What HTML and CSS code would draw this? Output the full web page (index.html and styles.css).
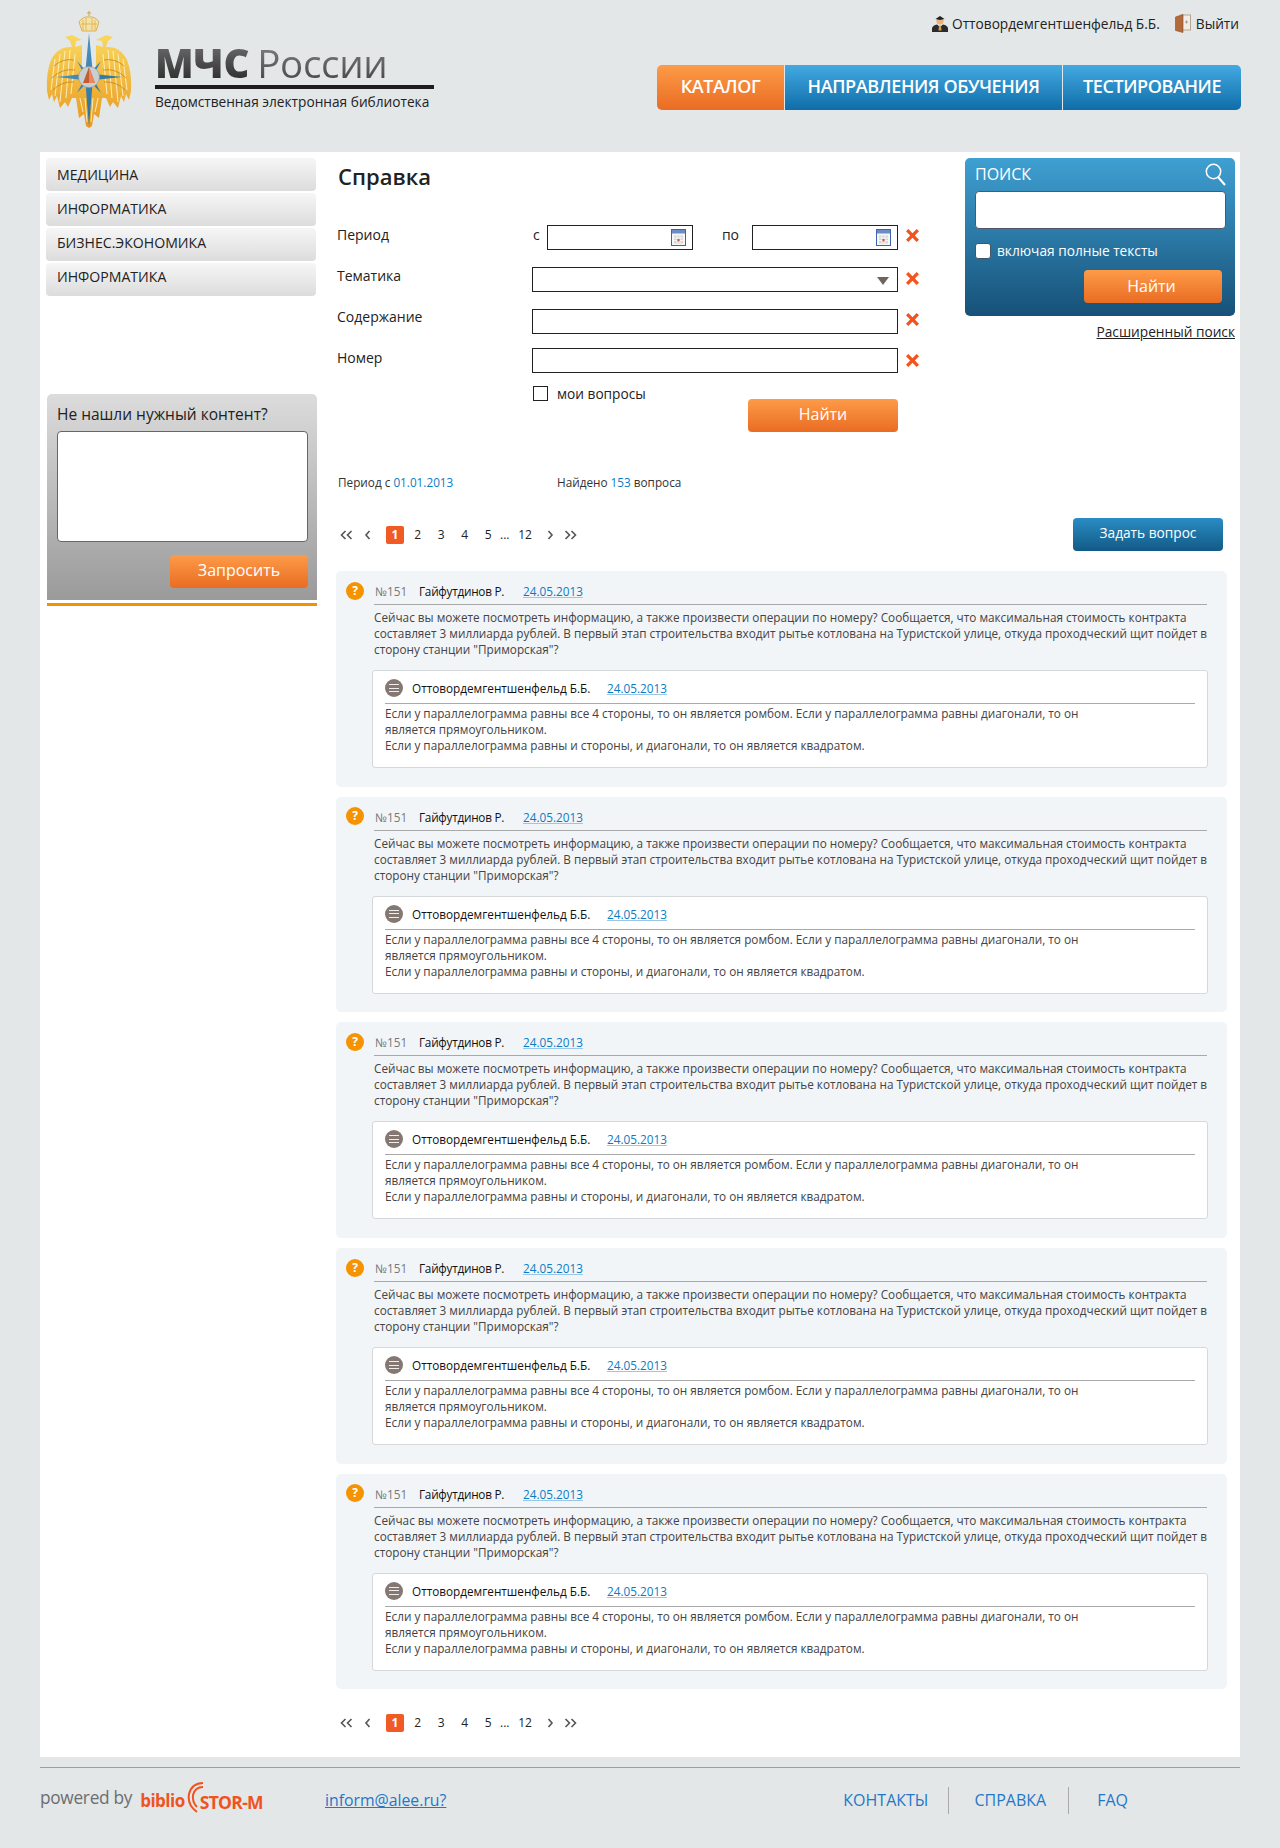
FILE: index.html
```html
<!DOCTYPE html>
<html lang="ru">
<head>
  <meta charset="UTF-8" />
  <title>МЧС России - Справка</title>
  <link rel="stylesheet" href="styles.css">
</head>
<body>

  <header class="top">
    <div class="logo">
      <svg class="emblem" width="88" height="118" viewBox="0 0 88 118">
        <defs>
          <linearGradient id="gold" x1="0" y1="0" x2="0" y2="1">
            <stop offset="0" stop-color="#f9d860"/>
            <stop offset="1" stop-color="#e8981f"/>
          </linearGradient>
          <linearGradient id="ray" x1="0" y1="0" x2="1" y2="1">
            <stop offset="0" stop-color="#5ba6cf"/>
            <stop offset="1" stop-color="#1c5f8e"/>
          </linearGradient>
          <g id="wing">
            <path d="M36 35 L29 37 L30 31 L36 30 L26 25 L19 27 L24 31 L26 37 Q12 36 5 50 Q0 62 1 81 L3 90 L6 84 L8 92 L11 86 L14 98 L19 92 L22 97 L26 88 L30 88 L33 108 L38 104 L40 116 L43 118 L43 80 L36 70Z" fill="url(#gold)"/>
            <path d="M9 49L5 80M14 44L9 86M19 41L14 92M24 40L20 88M29 44L25 84M34 88L37 102M39 88L41 112" stroke="#fff3c4" stroke-width=".9" fill="none"/>
            <path d="M8 56Q17 48 28 50M6 68Q16 58 29 60M7 80Q16 71 28 72" stroke="#bd7a12" stroke-width=".7" fill="none"/>
          </g>
        </defs>
        <path d="M43 1v5M41 3h4" stroke="#e0a63a" stroke-width="1.1" fill="none"/>
        <path d="M36 21 L33 12 Q37 6 43 7 Q49 6 53 12 L50 21 Z" fill="#f2e2a6" stroke="#d9a23c" stroke-width=".8"/>
        <path d="M37 10v10M40 8v12M46 8v12M49 10v10M35 14h16" stroke="#d9a23c" stroke-width=".6"/>
        <use href="#wing"/>
        <use href="#wing" transform="translate(86 0) scale(-1 1)"/>
        <path d="M43 23L46.500 60L55 51L48 64L76 67L48 70L55 83L46.500 74L43 116L39.500 74L31 83L38 70L10 67L38 64L31 51L39.500 60Z" fill="url(#ray)"/>
        <circle cx="43" cy="67" r="10.500" fill="#c9ced1" stroke="#8f989d" stroke-width=".6"/>
        <path d="M43 57L49 73H37Z" fill="#c45c33"/>
        <path d="M43 57L49 73H43Z" fill="#e8875a"/>
      </svg>
      <div class="logo-text">
        <div class="logo-title"><b>МЧС</b> <span>России</span></div>
        <div class="logo-sub">Ведомственная электронная библиотека</div>
      </div>
    </div>

    <div class="top-right">
      <div class="user-line">
        <svg width="16" height="17" viewBox="0 0 16 17">
          <path d="M0 17V13Q1 10 5 9.500L8 12L11 9.500Q15 10 16 13V17Z" fill="#2b2b2b"/>
          <circle cx="8" cy="6" r="3.600" fill="#e9b27c"/>
          <path d="M3.500 4L8 1L12.500 4L8 5Z" fill="#222"/>
          <path d="M7 10.500h2l.5 5h-3z" fill="#d9a04c"/>
        </svg>
        <span class="user-name">Оттовордемгентшенфельд Б.Б.</span>
        <svg class="door" width="16" height="19" viewBox="0 0 16 19">
          <rect x="6" y="1" width="9.500" height="15" fill="#f1ede6" stroke="#b8a68f"/>
          <path d="M0.500 3L8 0.500V18.500L0.500 16.500Z" fill="#b4693a" stroke="#8c4d26" stroke-width=".6"/>
          <path d="M10 8h3M11.500 6.500v3" stroke="#9a9a9a"/>
        </svg>
        <span>Выйти</span>
      </div>
      <nav class="main-nav">
        <a class="nav-item nav-active nav-catalog">КАТАЛОГ</a>
        <a class="nav-item nav-study">НАПРАВЛЕНИЯ ОБУЧЕНИЯ</a>
        <a class="nav-item nav-test">ТЕСТИРОВАНИЕ</a>
      </nav>
    </div>
  </header>

  <div class="page">
    <aside class="sidebar">
      <a class="side-item">МЕДИЦИНА</a>
      <a class="side-item">ИНФОРМАТИКА</a>
      <a class="side-item">БИЗНЕС.ЭКОНОМИКА</a>
      <a class="side-item">ИНФОРМАТИКА</a>

      <div class="request-box">
        <h3>Не нашли нужный контент?</h3>
        <textarea class="request-text"></textarea>
        <button class="btn btn-request">Запросить</button>
      </div>
      <div class="request-line"></div>
    </aside>

    <main class="content">
      <div class="content-top">
        <div class="filter">
          <h1>Справка</h1>

          <div class="row row-period">
            <label>Период</label>
            <span class="from">с</span>
            <div class="input date">
              <svg width="15" height="17" viewBox="0 0 15 17"><use href="#cal"/></svg>
            </div>
            <span class="to">по</span>
            <div class="input date">
              <svg width="15" height="17" viewBox="0 0 15 17"><use href="#cal"/></svg>
            </div>
            <svg class="clear" width="13" height="13" viewBox="1 1 11 11"><use href="#cross"/></svg>
          </div>
          <div class="row row-theme">
            <label>Тематика</label>
            <div class="input wide select"><span class="arrow"></span></div>
            <svg class="clear" width="13" height="13" viewBox="1 1 11 11"><use href="#cross"/></svg>
          </div>
          <div class="row row-text">
            <label>Содержание</label>
            <div class="input wide"></div>
            <svg class="clear" width="13" height="13" viewBox="1 1 11 11"><use href="#cross"/></svg>
          </div>
          <div class="row row-last">
            <label>Номер</label>
            <div class="input wide"></div>
            <svg class="clear" width="13" height="13" viewBox="1 1 11 11"><use href="#cross"/></svg>
          </div>

          <div class="mine">
            <span class="check"></span>
            <span>мои вопросы</span>
          </div>
          <button class="btn btn-find">Найти</button>

          <div class="info">
            <span class="info-period">Период с <em>01.01.2013</em></span>
            <span>Найдено <em>153</em> вопроса</span>
          </div>
        </div>

        <div class="search-col">
          <div class="search-box">
            <div class="search-head">
              <span>ПОИСК</span>
              <svg width="21" height="23" viewBox="0 0 21 23">
                <circle cx="8.500" cy="8.500" r="7.200" fill="none" stroke="#fff" stroke-width="1.500"/>
                <path d="M13 14L20 22" stroke="#fff" stroke-width="2"/>
              </svg>
            </div>
            <div class="search-input"></div>
            <div class="search-check"><span class="check-white"></span><span class="check-label">включая полные тексты</span></div>
            <button class="btn btn-search">Найти</button>
          </div>
          <a class="adv-link">Расширенный поиск</a>
        </div>
      </div>

      <div class="pager-row">
        <div class="pager">
          <svg class="pg-first" width="13" height="10" viewBox="0 0 13 10"><use href="#dbl-left"/></svg>
          <svg class="pg-prev" width="7" height="10" viewBox="0 0 7 10"><use href="#one-left"/></svg>
          <span class="pg-cur">1</span>
          <span class="pg">2</span><span class="pg">3</span><span class="pg">4</span><span class="pg">5</span>
          <span class="pg-dots">...</span><span class="pg-last">12</span>
          <svg class="pg-next" width="7" height="10" viewBox="0 0 7 10"><use href="#one-right"/></svg>
          <svg class="pg-end" width="13" height="10" viewBox="0 0 13 10"><use href="#dbl-right"/></svg>
        </div>
        <button class="btn btn-ask">Задать вопрос</button>
      </div>

      <div class="card">
        <div class="q-head">
          <span class="q-icon">?</span>
          <span class="q-num">№151</span><span class="q-name">Гайфутдинов Р.</span><a class="q-date">24.05.2013</a>
        </div>
        <p class="q-text">Сейчас вы можете посмотреть информацию, а также произвести операции по номеру? Сообщается, что максимальная стоимость контракта<br>составляет 3 миллиарда рублей. В первый этап строительства входит рытье котлована на Туристской улице, откуда проходческий щит пойдет в<br>сторону станции "Приморская"?</p>
        <div class="answer">
          <div class="a-head">
            <span class="a-icon"><i></i><i></i><i></i></span>
            <span class="a-name">Оттовордемгентшенфельд Б.Б.</span><a class="a-date">24.05.2013</a>
          </div>
          <p class="a-text">Если у параллелограмма равны все 4 стороны, то он является ромбом. Если у параллелограмма равны диагонали, то он<br>является прямоугольником.<br>Если у параллелограмма равны и стороны, и диагонали, то он является квадратом.</p>
        </div>
      </div>

      <div class="card">
        <div class="q-head">
          <span class="q-icon">?</span>
          <span class="q-num">№151</span><span class="q-name">Гайфутдинов Р.</span><a class="q-date">24.05.2013</a>
        </div>
        <p class="q-text">Сейчас вы можете посмотреть информацию, а также произвести операции по номеру? Сообщается, что максимальная стоимость контракта<br>составляет 3 миллиарда рублей. В первый этап строительства входит рытье котлована на Туристской улице, откуда проходческий щит пойдет в<br>сторону станции "Приморская"?</p>
        <div class="answer">
          <div class="a-head">
            <span class="a-icon"><i></i><i></i><i></i></span>
            <span class="a-name">Оттовордемгентшенфельд Б.Б.</span><a class="a-date">24.05.2013</a>
          </div>
          <p class="a-text">Если у параллелограмма равны все 4 стороны, то он является ромбом. Если у параллелограмма равны диагонали, то он<br>является прямоугольником.<br>Если у параллелограмма равны и стороны, и диагонали, то он является квадратом.</p>
        </div>
      </div>

      <div class="card">
        <div class="q-head">
          <span class="q-icon">?</span>
          <span class="q-num">№151</span><span class="q-name">Гайфутдинов Р.</span><a class="q-date">24.05.2013</a>
        </div>
        <p class="q-text">Сейчас вы можете посмотреть информацию, а также произвести операции по номеру? Сообщается, что максимальная стоимость контракта<br>составляет 3 миллиарда рублей. В первый этап строительства входит рытье котлована на Туристской улице, откуда проходческий щит пойдет в<br>сторону станции "Приморская"?</p>
        <div class="answer">
          <div class="a-head">
            <span class="a-icon"><i></i><i></i><i></i></span>
            <span class="a-name">Оттовордемгентшенфельд Б.Б.</span><a class="a-date">24.05.2013</a>
          </div>
          <p class="a-text">Если у параллелограмма равны все 4 стороны, то он является ромбом. Если у параллелограмма равны диагонали, то он<br>является прямоугольником.<br>Если у параллелограмма равны и стороны, и диагонали, то он является квадратом.</p>
        </div>
      </div>

      <div class="card">
        <div class="q-head">
          <span class="q-icon">?</span>
          <span class="q-num">№151</span><span class="q-name">Гайфутдинов Р.</span><a class="q-date">24.05.2013</a>
        </div>
        <p class="q-text">Сейчас вы можете посмотреть информацию, а также произвести операции по номеру? Сообщается, что максимальная стоимость контракта<br>составляет 3 миллиарда рублей. В первый этап строительства входит рытье котлована на Туристской улице, откуда проходческий щит пойдет в<br>сторону станции "Приморская"?</p>
        <div class="answer">
          <div class="a-head">
            <span class="a-icon"><i></i><i></i><i></i></span>
            <span class="a-name">Оттовордемгентшенфельд Б.Б.</span><a class="a-date">24.05.2013</a>
          </div>
          <p class="a-text">Если у параллелограмма равны все 4 стороны, то он является ромбом. Если у параллелограмма равны диагонали, то он<br>является прямоугольником.<br>Если у параллелограмма равны и стороны, и диагонали, то он является квадратом.</p>
        </div>
      </div>

      <div class="card">
        <div class="q-head">
          <span class="q-icon">?</span>
          <span class="q-num">№151</span><span class="q-name">Гайфутдинов Р.</span><a class="q-date">24.05.2013</a>
        </div>
        <p class="q-text">Сейчас вы можете посмотреть информацию, а также произвести операции по номеру? Сообщается, что максимальная стоимость контракта<br>составляет 3 миллиарда рублей. В первый этап строительства входит рытье котлована на Туристской улице, откуда проходческий щит пойдет в<br>сторону станции "Приморская"?</p>
        <div class="answer">
          <div class="a-head">
            <span class="a-icon"><i></i><i></i><i></i></span>
            <span class="a-name">Оттовордемгентшенфельд Б.Б.</span><a class="a-date">24.05.2013</a>
          </div>
          <p class="a-text">Если у параллелограмма равны все 4 стороны, то он является ромбом. Если у параллелограмма равны диагонали, то он<br>является прямоугольником.<br>Если у параллелограмма равны и стороны, и диагонали, то он является квадратом.</p>
        </div>
      </div>

      <div class="pager pager-bottom">
        <svg class="pg-first" width="13" height="10" viewBox="0 0 13 10"><use href="#dbl-left"/></svg>
        <svg class="pg-prev" width="7" height="10" viewBox="0 0 7 10"><use href="#one-left"/></svg>
        <span class="pg-cur">1</span>
        <span class="pg">2</span><span class="pg">3</span><span class="pg">4</span><span class="pg">5</span>
        <span class="pg-dots">...</span><span class="pg-last">12</span>
        <svg class="pg-next" width="7" height="10" viewBox="0 0 7 10"><use href="#one-right"/></svg>
        <svg class="pg-end" width="13" height="10" viewBox="0 0 13 10"><use href="#dbl-right"/></svg>
      </div>
    </main>
  </div>

  <footer class="bottom">
    <div class="powered">
      <span class="powered-by">powered by</span>
      <span class="biblio">biblio</span>
      <svg class="biblio-arcs" width="19" height="32" viewBox="0 0 19 32">
        <path d="M17 2Q6 2 3 13Q1 24 11 31" fill="none" stroke="#f0531f" stroke-width="2"/>
        <path d="M17 6Q9 6 7 14Q6 21 11 26" fill="none" stroke="#f0531f" stroke-width="2"/>
      </svg>
      <span class="stor">STOR-M</span>
    </div>
    <a class="mail">inform@alee.ru?</a>
    <div class="foot-links">
      <a class="foot-contacts">КОНТАКТЫ</a>
      <a class="foot-help">СПРАВКА</a>
      <a class="foot-faq">FAQ</a>
    </div>
  </footer>

  <!-- shared icons -->
  <svg class="defs" width="0" height="0">
    <defs>
      <g id="cal">
        <rect x=".5" y=".5" width="14" height="16" fill="#f4f6fa" stroke="#3f62ad"/>
        <rect x="1" y="1" width="13" height="3.500" fill="#6c8cc6"/>
        <path d="M3 6.500h9v8h-9z" fill="#d8d8d8"/>
        <path d="M3 9h9M3 11.500h9M6 6.500v8M9 6.500v8" stroke="#fff" stroke-width=".7"/>
        <rect x="6.400" y="10" width="2.200" height="2.200" fill="#d9503c"/>
      </g>
      <path id="cross" d="M1 3L3 1L6.500 4.500L10 1L12 3L8.500 6.500L12 10L10 12L6.500 8.500L3 12L1 10L4.500 6.500Z" fill="#f1541f"/>
      <path id="one-left" d="M5.500 1L2 5L5.500 9" fill="none" stroke="#555" stroke-width="1.600"/>
      <path id="one-right" d="M1.500 1L5 5L1.500 9" fill="none" stroke="#555" stroke-width="1.600"/>
      <path id="dbl-left" d="M5.500 1L1.500 5L5.500 9M11.500 1L7.500 5L11.500 9" fill="none" stroke="#555" stroke-width="1.600"/>
      <path id="dbl-right" d="M1.500 1L5.500 5L1.500 9M7.500 1L11.500 5L7.500 9" fill="none" stroke="#555" stroke-width="1.600"/>
    </defs>
  </svg>

</body>
</html>
```

FILE: styles.css
```css
body {
  margin: 0;
  background: #e3e7e8;
  font-family: "Open Sans", "Noto Sans", sans-serif;
  font-size: 11.75px;
  color: #333;
}
a {
  cursor: pointer;
}
p, h1, h3 {
  margin: 0;
}
em {
  font-style: normal;
  color: #0a7cc4;
}
.defs {
  display: block;
  height: 0;
}

/* header */
.top {
  height: 152px;
  display: flex;
  justify-content: space-between;
  padding: 0 39px 0 46px;
}
.logo {
  display: flex;
  padding-top: 10px;
}
.emblem {
  display: block;
}
.logo-text {
  margin-left: 21px;
  padding-top: 31px;
  width: 279px;
}
.logo-title {
  font-size: 40px;
  line-height: 44px;
  height: 44px;
  white-space: nowrap;
  letter-spacing: -.3px;
  border-bottom: 4px solid #1d1d1d;
}
.logo-title b, .logo-title span {
  color: transparent;
  -webkit-background-clip: text;
  background-clip: text;
}
.logo-title b {
  font-weight: 800;
  background-image: linear-gradient(#7a7a7a, #1f1f1f);
}
.logo-title span {
  font-size: 38.5px;
  margin-left: -2px;
  background-image: linear-gradient(#8a8a8a, #3d3d3d);
}
.logo-sub {
  font-size: 13.7px;
  line-height: 18px;
  margin-top: 4px;
  color: #222;
}
.top-right {
  width: 584px;
}
.user-line {
  display: flex;
  justify-content: flex-end;
  align-items: center;
  height: 20px;
  margin-top: 13px;
  padding-right: 2px;
  font-size: 13.7px;
  color: #222;
}
.user-name {
  margin-left: 4px;
}
.door {
  margin: 0 5px 0 15px;
}
.main-nav {
  display: flex;
  margin-top: 32px;
  height: 45px;
}
.nav-item {
  display: flex;
  align-items: center;
  justify-content: center;
  box-sizing: border-box;
  padding-bottom: 4px;
  color: #fff;
  font-size: 18px;
  font-weight: 600;
  letter-spacing: -.4px;
  background: linear-gradient(#44a9e2, #0f6da8);
  border-left: 1px solid #e3e7e8;
}
.nav-catalog {
  width: 127px;
  border-left: 0;
  border-radius: 5px 0 0 5px;
  background: linear-gradient(#fd9b48, #e96c23);
}
.nav-study {
  width: 278px;
}
.nav-test {
  width: 179px;
  border-radius: 0 5px 5px 0;
}

/* page */
.page {
  display: flex;
  width: 1200px;
  height: 1605px;
  margin-left: 40px;
  background: #fff;
}
.sidebar {
  width: 271px;
  padding: 6px 0 0 6px;
  flex: none;
}
.side-item {
  display: block;
  width: 270px;
  height: 33px;
  line-height: 34px;
  margin-bottom: 2px;
  padding-left: 11px;
  box-sizing: border-box;
  font-size: 14.1px;
  color: #222;
  border-radius: 4px;
  background: linear-gradient(#f6f6f6, #dcdcdc);
}
.side-item:nth-child(2) {
  line-height: 32px;
}
.side-item:nth-child(3) {
  line-height: 30px;
}
.side-item:nth-child(4) {
  line-height: 28px;
}
.request-box {
  width: 270px;
  height: 206px;
  margin: 98px 0 0 1px;
  padding: 10px 9px 0 10px;
  box-sizing: border-box;
  border-radius: 5px 5px 0 0;
  background: linear-gradient(#dcdcdc, #9a9a9a);
  text-align: right;
}
.request-box h3 {
  font-size: 15.5px;
  line-height: 20px;
  font-weight: 400;
  color: #222;
  text-align: left;
}
.request-text {
  display: block;
  width: 251px;
  height: 111px;
  margin-top: 7px;
  padding: 0;
  box-sizing: border-box;
  border: 1px solid #666;
  border-radius: 4px;
  background: #fff;
  resize: none;
}
.request-line {
  width: 270px;
  height: 3px;
  margin: 3px 0 0 1px;
  background: #f39200;
}
.btn {
  display: block;
  border: 0;
  padding: 0 0 3px;
  color: #fff;
  font-family: inherit;
  font-size: 16px;
  border-radius: 4px;
  background: linear-gradient(#fd9b48, #e96c23);
  cursor: pointer;
}
.btn-request {
  width: 138px;
  height: 33px;
  margin: 13px 0 0 auto;
}

/* filter */
.content {
  width: 899px;
  margin-left: 19px;
  flex: none;
}
.content-top {
  display: flex;
  justify-content: space-between;
  height: 366px;
}
.filter {
  width: 584px;
  padding-left: 2px;
  box-sizing: border-box;
}
h1 {
  font-size: 22px;
  line-height: 30px;
  font-weight: 600;
  color: #222;
  margin-top: 9px;
}
.row {
  display: flex;
  align-items: flex-start;
  height: 25px;
  margin-bottom: 17px;
  font-size: 14px;
  color: #222;
}
.row-period {
  margin-top: 34px;
}
.row-last {
  margin-top: -3px;
  margin-bottom: 10px;
}
.row label {
  width: 194px;
  line-height: 20px;
  flex: none;
  margin-left: -1px;
  margin-right: 1px;
}
.row-theme label {
  margin-top: -1px;
}
.row-text label {
  margin-top: -2px;
}
.from {
  width: 15px;
  padding-left: 1px;
  box-sizing: border-box;
  line-height: 20px;
}
.to {
  width: 59px;
  padding-right: 13px;
  box-sizing: border-box;
  line-height: 20px;
  text-align: right;
}
.input {
  box-sizing: border-box;
  height: 25px;
  border: 1px solid #222;
  background: #fff;
  display: flex;
  align-items: center;
  justify-content: flex-end;
}
.date {
  width: 146px;
  padding-right: 6px;
}
.wide {
  width: 366px;
}
.select {
  padding-right: 8px;
}
.arrow {
  border-top: 8px solid #6d6560;
  border-left: 6px solid transparent;
  border-right: 6px solid transparent;
  margin-top: 2px;
}
.clear {
  margin: 4px 0 0 8px;
}
.row-theme .clear {
  margin-top: 5px;
}
.row-last .clear {
  margin-top: 6px;
}
.mine {
  display: flex;
  align-items: center;
  margin-left: 195px;
  height: 20px;
  font-size: 13.7px;
  color: #222;
}
.check {
  width: 15px;
  height: 15px;
  box-sizing: border-box;
  border: 1px solid #222;
  margin-right: 9px;
}
.btn-find {
  width: 150px;
  height: 33px;
  margin: -4px 0 0 410px;
}
.info {
  display: flex;
  margin-top: 42px;
  line-height: 16px;
  color: #333;
}
.info-period {
  width: 219px;
}

/* search */
.search-col {
  width: 270px;
  padding-top: 6px;
}
.search-box {
  height: 158px;
  box-sizing: border-box;
  padding: 0 9px 0 10px;
  border-radius: 5px;
  background: linear-gradient(#3fa0d2, #165178);
  color: #fff;
}
.search-head {
  display: flex;
  justify-content: space-between;
  height: 33px;
  padding-top: 6px;
  box-sizing: border-box;
  font-size: 16px;
  line-height: 21px;
}
.search-head svg {
  margin-top: -1px;
}
.search-input {
  height: 38px;
  box-sizing: border-box;
  background: #fff;
  border: 1px solid #556;
  border-radius: 4px;
}
.search-check {
  display: flex;
  align-items: center;
  height: 16px;
  margin-top: 14px;
  font-size: 13.7px;
}
.check-label {
  margin-top: -2px;
}
.check-white {
  width: 16px;
  height: 16px;
  box-sizing: border-box;
  background: #fff;
  border: 1px solid #456;
  border-radius: 3px;
  margin-right: 6px;
}
.btn-search {
  width: 138px;
  height: 33px;
  padding: 0 3px 2px 0;
  margin: 11px 0 0 109px;
}
.adv-link {
  display: block;
  margin-top: 7px;
  font-size: 13.7px;
  line-height: 18px;
  color: #222;
  text-align: right;
  text-decoration: underline;
}

/* pager */
.pager-row {
  display: flex;
  justify-content: space-between;
  align-items: center;
  height: 33px;
  width: 887px;
}
.btn-ask {
  width: 150px;
  height: 33px;
  padding-bottom: 4px;
  font-size: 13.7px;
  background: linear-gradient(#2a8cc4, #125a86);
}
.pager {
  display: flex;
  align-items: center;
  padding-left: 4px;
  height: 20px;
  font-size: 12px;
  color: #222;
}
.pager svg {
  flex: none;
}
.pg-prev {
  margin-left: 11px;
}
.pg-cur {
  width: 18px;
  height: 18px;
  line-height: 18px;
  margin-left: 15px;
  margin-right: 2px;
  text-align: center;
  color: #fff;
  font-weight: 700;
  background: #f15a24;
  border-radius: 2px;
}
.pg {
  width: 23.5px;
  text-align: center;
}
.pg-dots {
  width: 9px;
  text-align: center;
}
.pg-last {
  margin-left: 9px;
  width: 14px;
  text-align: center;
}
.pg-next {
  margin-left: 15px;
}
.pg-end {
  margin-left: 10px;
}
.pager-bottom {
  margin-top: 23.5px;
}

/* question cards */
.card {
  box-sizing: border-box;
  width: 891px;
  height: 215.7px;
  margin-top: 10px;
  padding: 8px 20px 0 10px;
  border-radius: 5px;
  background: #f2f5f8;
}
.pager-row + .card {
  margin-top: 20px;
}
.q-head {
  display: flex;
  align-items: center;
  height: 23px;
}
.q-icon {
  width: 18px;
  height: 18px;
  line-height: 18px;
  border-radius: 50%;
  flex: none;
  text-align: center;
  color: #fff;
  font-weight: 700;
  font-size: 12px;
  background: #f59300;
}
.q-num {
  margin-left: 11px;
  width: 44px;
  color: #777;
  padding-top: 1px;
}
.q-name {
  width: 104px;
  color: #111;
  letter-spacing: -.25px;
  padding-top: 1px;
}
.q-date {
  padding-top: 1px;
}
.q-date, .a-date {
  color: #0a7cc4;
  text-decoration: underline;
  text-decoration-color: #9cc6e6;
}
.q-text {
  margin: 2px 0 0 28px;
  padding-top: 4px;
  border-top: 1px solid #a9a9a9;
  line-height: 16px;
  color: #444;
  height: 48px;
  white-space: nowrap;
}
.answer {
  box-sizing: border-box;
  width: 836px;
  height: 98px;
  margin: 13px 0 0 26px;
  padding: 8px 12px 0 12px;
  background: #fff;
  border: 1px solid #d5d9dc;
  border-radius: 3px;
}
.a-head {
  display: flex;
  align-items: center;
  height: 18px;
}
.a-icon {
  width: 18px;
  height: 18px;
  flex: none;
  box-sizing: border-box;
  padding: 5px 4px;
  border-radius: 50%;
  background: #857873;
  display: flex;
  flex-direction: column;
  justify-content: space-between;
}
.a-icon i {
  display: block;
  height: 1px;
  background: #eee;
}
.a-name {
  margin-left: 9px;
  width: 195px;
  color: #111;
}
.a-text {
  margin-top: 6px;
  padding-top: 1px;
  width: 810px;
  border-top: 1px solid #a9a9a9;
  line-height: 16px;
  color: #444;
  white-space: nowrap;
}

/* footer */
.bottom {
  display: flex;
  align-items: center;
  box-sizing: border-box;
  width: 1200px;
  height: 61px;
  margin: 10px 0 0 40px;
  padding-top: 4px;
  border-top: 1px solid #9a9ea0;
}
.powered {
  display: flex;
  align-items: center;
  width: 285px;
}
.powered-by {
  font-size: 17.3px;
  color: #6d6e70;
  letter-spacing: -.3px;
  margin-top: -5px;
}
.biblio {
  margin-left: 8px;
  font-size: 17px;
  font-weight: 700;
  color: #f0531f;
  letter-spacing: -.5px;
}
.biblio-arcs {
  margin-left: 1px;
  margin-top: -6px;
}
.stor {
  margin-left: -5px;
  margin-top: 3px;
  font-size: 17.5px;
  font-weight: 700;
  color: #f0531f;
  letter-spacing: -.7px;
}
.mail {
  font-size: 15.8px;
  color: #1f78c8;
  text-decoration: underline;
}
.foot-links {
  display: flex;
  align-items: center;
  margin-left: 397px;
  font-size: 16px;
  color: #1f78c8;
}
.foot-links a {
  line-height: 27px;
}
.foot-contacts {
  padding-right: 20px;
  border-right: 1px solid #aaa;
}
.foot-help {
  padding: 0 22px 0 25px;
  border-right: 1px solid #aaa;
}
.foot-faq {
  padding-left: 28px;
}
```
